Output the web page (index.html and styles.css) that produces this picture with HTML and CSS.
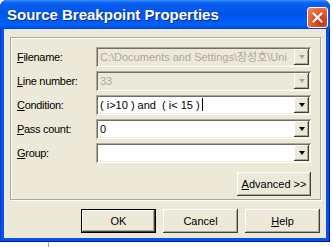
FILE: index.html
```html
<!DOCTYPE html>
<html lang="en">
<head>
  <meta charset="UTF-8" />
  <title>Source Breakpoint Properties</title>
  <link rel="stylesheet" href="styles.css">
</head>
<body>
  <div class="window">
    <div class="titlebar">
      <span class="title">Source Breakpoint Properties</span>
      <button class="close" aria-label="Close">
        <svg width="11" height="11" viewBox="0 0 11 11">
          <path d="M1.5 1.5 L9.5 9.5 M9.5 1.5 L1.5 9.5" stroke="#fff" stroke-width="2" stroke-linecap="square"/>
        </svg>
      </button>
    </div>

    <div class="client">
      <div class="group">
        <div class="fields">
          <label><u>F</u>ilename:</label>
          <div class="combo disabled">
            <span class="value">C:\Documents and Settings\장성호\Uni</span>
            <span class="drop"><i class="arrow"></i></span>
          </div>

          <label><u>L</u>ine number:</label>
          <div class="combo disabled">
            <span class="value">33</span>
            <span class="drop"><i class="arrow"></i></span>
          </div>

          <label><u>C</u>ondition:</label>
          <div class="combo">
            <span class="value">( i&gt;10 ) and&nbsp; ( i&lt; 15 )<span class="caret"></span></span>
            <span class="drop"><i class="arrow"></i></span>
          </div>

          <label><u>P</u>ass count:</label>
          <div class="combo">
            <span class="value">0</span>
            <span class="drop"><i class="arrow"></i></span>
          </div>

          <label><u>G</u>roup:</label>
          <div class="combo">
            <span class="value"></span>
            <span class="drop"><i class="arrow"></i></span>
          </div>
        </div>

        <div class="adv-row">
          <button class="btn adv"><u>A</u>dvanced &gt;&gt;</button>
        </div>
      </div>

      <div class="actions">
        <button class="btn default">OK</button>
        <button class="btn">Cancel</button>
        <button class="btn"><u>H</u>elp</button>
      </div>
    </div>
  </div>
  <div class="below"><div class="stub"></div></div>
</body>
</html>
```

FILE: styles.css
```css
body {
  margin: 0;
  background: #fff;
  font-family: "Liberation Sans", Arial, "Noto Sans CJK KR", sans-serif;
  font-size: 11px;
}
.window {
  width: 330px;
  height: 242px;
  box-sizing: border-box;
  display: flex;
  flex-direction: column;
  padding: 0 4px 4px;
  background: #0055e8;
  border-radius: 7px 7px 0 0;
  box-shadow: inset 1px 0 #0831d9, inset -1px -1px #00138c;
}
.titlebar {
  height: 29px;
  margin: 0 -4px;
  padding: 0 2px 0 7px;
  display: flex;
  align-items: flex-start;
  justify-content: space-between;
  border-radius: 7px 7px 0 0;
  background: linear-gradient(to bottom, #3a93ff 0%, #0a5ff0 10%, #0054e6 45%, #0060f8 85%, #0057ec 93%, #0040d4 100%);
}
.title {
  margin-top: 6px;
  color: #fff;
  font-size: 15px;
  font-weight: bold;
  text-shadow: 1px 1px #0c2a8c;
}
.close {
  margin-top: 7px;
  width: 21px;
  height: 21px;
  padding: 0;
  border: 1px solid #fff;
  border-radius: 3px;
  background: radial-gradient(circle at 70% 75%, #c43210 0%, #e2552d 45%, #ee8a6a 100%);
  display: flex;
  align-items: center;
  justify-content: center;
}
.client {
  flex: 1;
  background: #ece9d8;
  padding: 8px 5px 5px 6px;
  display: flex;
  flex-direction: column;
}
.group {
  height: 163px;
  box-sizing: border-box;
  padding: 9px 9px 0 6px;
  border: 1px solid #aca899;
  box-shadow: inset 1px 1px #fff, 1px 1px #fff;
}
.fields {
  display: grid;
  grid-template-columns: 79px 1fr;
  grid-auto-rows: 20px;
  row-gap: 4px;
}
.fields label {
  line-height: 20px;
  letter-spacing: -0.3px;
  color: #000;
}
.combo {
  display: flex;
  background: #fff;
  box-shadow: inset 1px 1px #aca899, inset -1px -1px #fff, inset 2px 2px #716f64, inset -2px -2px #f1efe2;
}
.combo .value {
  flex: 1;
  padding-left: 4px;
  line-height: 20px;
  white-space: nowrap;
  overflow: hidden;
  color: #000;
}
.combo.disabled {
  background: #ece9d8;
}
.combo.disabled .value {
  color: #aca899;
}
.caret {
  display: inline-block;
  width: 1px;
  height: 13px;
  margin-left: 2px;
  vertical-align: -2px;
  background: #000;
}
.drop {
  width: 15px;
  height: 16px;
  margin: 2px;
  background: #ece9d8;
  box-shadow: inset -1px -1px #404040, inset 1px 1px #fff, inset -2px -2px #aca899;
  display: flex;
  align-items: center;
  justify-content: center;
}
.arrow {
  width: 0;
  height: 0;
  border-left: 3.5px solid transparent;
  border-right: 3.5px solid transparent;
  border-top: 4px solid #000;
}
.disabled .arrow {
  border-top-color: #aca899;
}
.adv-row {
  display: flex;
  justify-content: flex-end;
  margin-top: 9px;
}
.btn {
  width: 75px;
  height: 24px;
  padding: 0;
  border: none;
  background: #ece9d8;
  font-family: inherit;
  font-size: 11px;
  color: #000;
  box-shadow: inset -1px -1px #404040, inset 1px 1px #fff, inset -2px -2px #aca899;
}
.btn.adv {
  width: 74px;
}
.btn.default {
  outline: 1px solid #000;
  outline-offset: -1px;
  box-shadow: inset -2px -2px #404040, inset 2px 2px #fff, inset -3px -3px #aca899;
}
.actions {
  display: flex;
  justify-content: flex-end;
  gap: 7px;
  margin-top: 9px;
  padding-right: 1px;
}
.below {
  height: 5px;
}
.stub {
  width: 48px;
  height: 5px;
  border-right: 1px solid #aca899;
}
```
